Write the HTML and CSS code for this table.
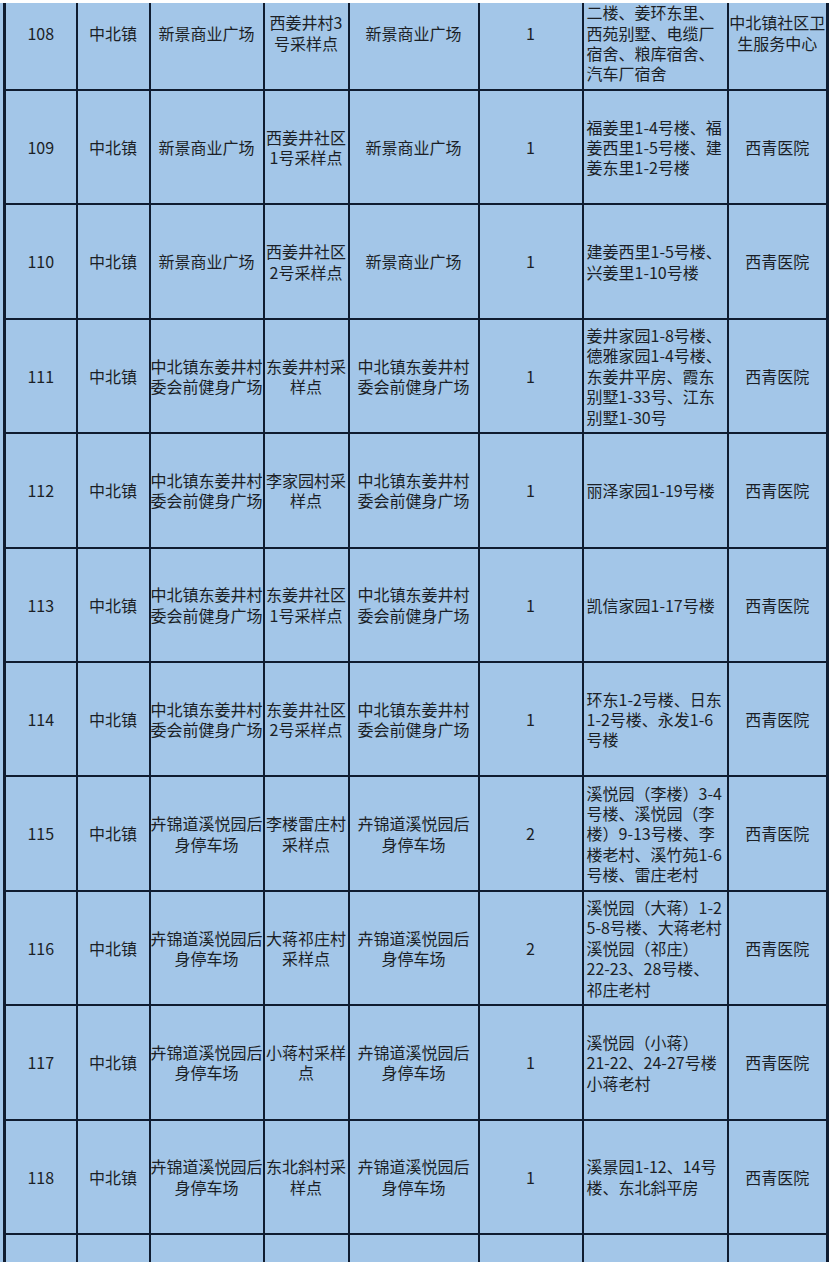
FILE: index.html
```html
<!DOCTYPE html>
<html lang="zh-CN">
<head>
<meta charset="utf-8">
<title>采样点安排表</title>
<link rel="stylesheet" href="styles.css">
</head>
<body>
<div class="frame">
<table class="sheet">
<colgroup>
<col class="c-no"><col class="c-town"><col class="c-site"><col class="c-point"><col class="c-place"><col class="c-num"><col class="c-area"><col class="c-hosp">
</colgroup>
<tbody>
<tr><td>108</td><td>中北镇</td><td>新景商业广场</td><td>西姜井村3<br>号采样点</td><td>新景商业广场</td><td>1</td><td class="area"><br>二楼、姜环东里、<br>西苑别墅、电缆厂<br>宿舍、粮库宿舍、<br>汽车厂宿舍</td><td>中北镇社区卫<br>生服务中心</td></tr>
<tr><td>109</td><td>中北镇</td><td>新景商业广场</td><td>西姜井社区<br>1号采样点</td><td>新景商业广场</td><td>1</td><td class="area">福姜里1-4号楼、福<br>姜西里1-5号楼、建<br>姜东里1-2号楼</td><td>西青医院</td></tr>
<tr><td>110</td><td>中北镇</td><td>新景商业广场</td><td>西姜井社区<br>2号采样点</td><td>新景商业广场</td><td>1</td><td class="area">建姜西里1-5号楼、<br>兴姜里1-10号楼</td><td>西青医院</td></tr>
<tr><td>111</td><td>中北镇</td><td>中北镇东姜井村<br>委会前健身广场</td><td>东姜井村采<br>样点</td><td>中北镇东姜井村<br>委会前健身广场</td><td>1</td><td class="area">姜井家园1-8号楼、<br>德雅家园1-4号楼、<br>东姜井平房、霞东<br>别墅1-33号、江东<br>别墅1-30号</td><td>西青医院</td></tr>
<tr><td>112</td><td>中北镇</td><td>中北镇东姜井村<br>委会前健身广场</td><td>李家园村采<br>样点</td><td>中北镇东姜井村<br>委会前健身广场</td><td>1</td><td class="area">丽泽家园1-19号楼</td><td>西青医院</td></tr>
<tr><td>113</td><td>中北镇</td><td>中北镇东姜井村<br>委会前健身广场</td><td>东姜井社区<br>1号采样点</td><td>中北镇东姜井村<br>委会前健身广场</td><td>1</td><td class="area">凯信家园1-17号楼</td><td>西青医院</td></tr>
<tr><td>114</td><td>中北镇</td><td>中北镇东姜井村<br>委会前健身广场</td><td>东姜井社区<br>2号采样点</td><td>中北镇东姜井村<br>委会前健身广场</td><td>1</td><td class="area">环东1-2号楼、日东<br>1-2号楼、永发1-6<br>号楼</td><td>西青医院</td></tr>
<tr><td>115</td><td>中北镇</td><td>卉锦道溪悦园后<br>身停车场</td><td>李楼雷庄村<br>采样点</td><td>卉锦道溪悦园后<br>身停车场</td><td>2</td><td class="area">溪悦园（李楼）3-4<br>号楼、溪悦园（李<br>楼）9-13号楼、李<br>楼老村、溪竹苑1-6<br>号楼、雷庄老村</td><td>西青医院</td></tr>
<tr><td>116</td><td>中北镇</td><td>卉锦道溪悦园后<br>身停车场</td><td>大蒋祁庄村<br>采样点</td><td>卉锦道溪悦园后<br>身停车场</td><td>2</td><td class="area">溪悦园（大蒋）1-2<br>5-8号楼、大蒋老村<br>溪悦园（祁庄）<br>22-23、28号楼、<br>祁庄老村</td><td>西青医院</td></tr>
<tr><td>117</td><td>中北镇</td><td>卉锦道溪悦园后<br>身停车场</td><td>小蒋村采样<br>点</td><td>卉锦道溪悦园后<br>身停车场</td><td>1</td><td class="area">溪悦园（小蒋）<br>21-22、24-27号楼<br>小蒋老村</td><td>西青医院</td></tr>
<tr><td>118</td><td>中北镇</td><td>卉锦道溪悦园后<br>身停车场</td><td>东北斜村采<br>样点</td><td>卉锦道溪悦园后<br>身停车场</td><td>1</td><td class="area">溪景园1-12、14号<br>楼、东北斜平房</td><td>西青医院</td></tr>
<tr class="tail"><td></td><td></td><td></td><td></td><td></td><td></td><td class="area"></td><td></td></tr>
</tbody>
</table>
</div>
</body>
</html>
```

FILE: styles.css
```css
html, body {
  margin: 0;
  padding: 0;
  background: #ffffff;
}

.frame {
  margin-top: 3px;
  width: 826px;
  height: 1259px;
  padding-left: 3px;
  overflow: hidden;
  background: #a3c6e8;
}

.sheet {
  border-collapse: collapse;
  table-layout: fixed;
  width: 826px;
  margin-top: -28.4px;
  font-family: "Noto Sans CJK SC", "Noto Sans", sans-serif;
  font-size: 16px;
  line-height: 20.4px;
  color: #1b1f26;
  background: #a3c6e8;
}

.c-no { width: 72px; }
.c-town { width: 73px; }
.c-site { width: 114px; }
.c-point { width: 85px; }
.c-place { width: 130px; }
.c-num { width: 104px; }
.c-area { width: 145px; }
.c-hosp { width: 100px; }

.sheet tr {
  height: 114.4px;
}

.sheet td {
  border: 2px solid #0f1c30;
  padding: 0;
  text-align: center;
  vertical-align: middle;
  white-space: nowrap;
  overflow: visible;
}

.sheet td:first-child {
  border-left-width: 3px;
}

.sheet td:last-child {
  border-right-width: 3px;
}

.sheet td.area {
  text-align: left;
  padding-left: 3px;
}
```
